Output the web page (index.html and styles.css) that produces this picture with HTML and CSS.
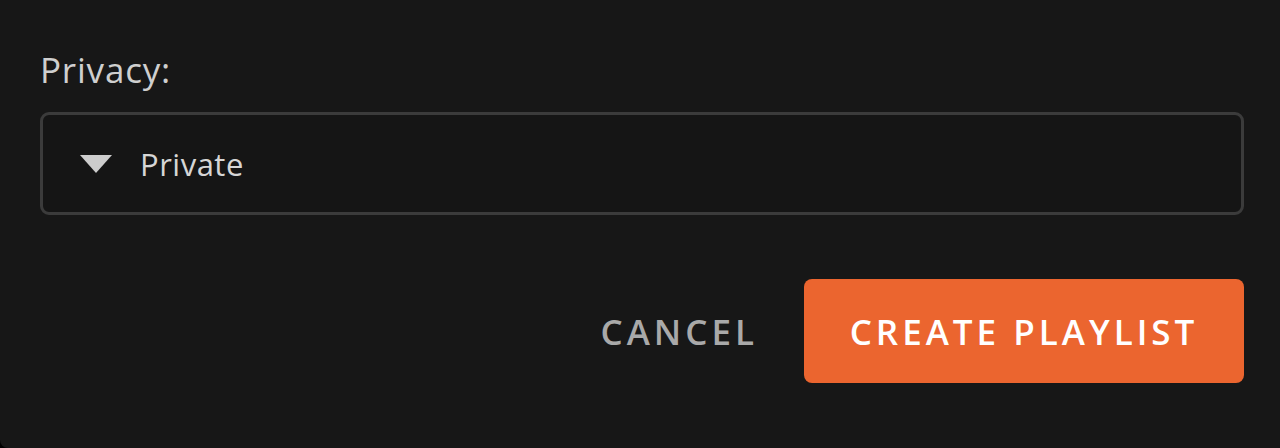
FILE: index.html
```html
<!DOCTYPE html>
<html>
<head>
    <title>Create Playlist</title>
    <link rel="stylesheet" href="styles.css">
</head>
<body>
    <div class="dialog">
        <label class="field-label" for="privacy">Privacy:</label>
        <div class="select" id="privacy">
            <svg class="caret" width="32" height="18" viewBox="0 0 32 18">
                <polygon points="0,0 32,0 16,18" />
            </svg>
            <span class="select-value">Private</span>
        </div>
        <div class="actions">
            <button class="btn btn-cancel">Cancel</button>
            <button class="btn btn-primary">Create Playlist</button>
        </div>
    </div>
</body>
</html>
```

FILE: styles.css
```css
html, body {
    margin: 0;
    height: 100%;
    background-color: #000;
}

body {
    font-family: "Open Sans", "Noto Sans", sans-serif;
}

.dialog {
    box-sizing: border-box;
    height: 448px;
    background-color: #171717;
    padding: 46px 36px 0 40px;
    border-bottom-left-radius: 8px;
    display: flex;
    flex-direction: column;
}

.field-label {
    font-size: 35px;
    line-height: 48px;
    letter-spacing: 0.8px;
    color: #cfcfcf;
    margin-bottom: 18px;
}

.select {
    box-sizing: border-box;
    height: 103px;
    border: 3px solid #3b3b3b;
    border-radius: 9px;
    background-color: #151515;
    display: flex;
    align-items: center;
    padding-left: 37px;
}

.caret {
    fill: #cdcdcd;
    margin-right: 28px;
}

.select-value {
    font-size: 31px;
    letter-spacing: 0.5px;
    color: #d6d6d6;
}

.actions {
    display: flex;
    justify-content: flex-end;
    align-items: center;
    margin-top: 64px;
    gap: 46px;
}

.btn {
    font-family: inherit;
    font-weight: 600;
    font-size: 35px;
    letter-spacing: 4px;
    text-transform: uppercase;
    border: none;
    cursor: pointer;
    background: none;
    padding: 0;
}

.btn-cancel {
    color: #a9a9a9;
}

.btn-primary {
    width: 440px;
    height: 104px;
    background-color: #eb652f;
    color: #fff;
    border-radius: 8px;
}
```
